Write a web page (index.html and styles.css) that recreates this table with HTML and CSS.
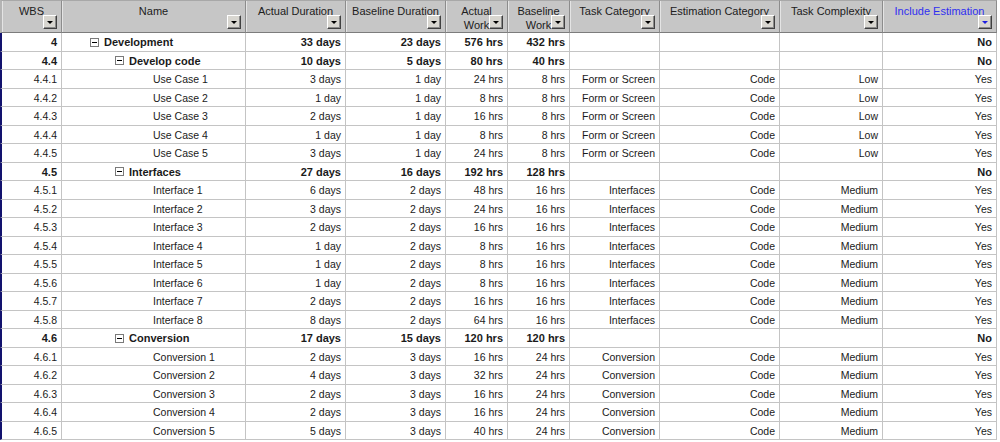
FILE: index.html
```html
<!DOCTYPE html>
<html>
<head>
<meta charset="utf-8">
<link rel="stylesheet" href="styles.css">
</head>
<body>
<div class="sheet">
  <div class="row head">
    <div class="hc"><span class="ht">WBS</span><span class="dd"></span></div>
    <div class="hc"><span class="ht">Name</span><span class="dd"></span></div>
    <div class="hc"><span class="ht nowrap">Actual Duration</span><span class="dd"></span></div>
    <div class="hc"><span class="ht nowrap">Baseline Duration</span><span class="dd"></span></div>
    <div class="hc"><span class="ht">Actual<br>Work</span><span class="dd"></span></div>
    <div class="hc"><span class="ht">Baseline<br>Work</span><span class="dd"></span></div>
    <div class="hc"><span class="ht nowrap">Task Category</span><span class="dd"></span></div>
    <div class="hc"><span class="ht nowrap">Estimation Category</span><span class="dd"></span></div>
    <div class="hc"><span class="ht nowrap">Task Complexity</span><span class="dd"></span></div>
    <div class="hc active"><span class="ht nowrap">Include Estimation</span><span class="dd"></span></div>
  </div>

  <div class="row sum"><div class="c wbs">4</div><div class="c nm l1"><span class="tg"></span>Development</div><div class="c">33 days</div><div class="c">23 days</div><div class="c">576 hrs</div><div class="c">432 hrs</div><div class="c"></div><div class="c"></div><div class="c"></div><div class="c">No</div></div>
  <div class="row sum"><div class="c wbs">4.4</div><div class="c nm l2"><span class="tg"></span>Develop code</div><div class="c">10 days</div><div class="c">5 days</div><div class="c">80 hrs</div><div class="c">40 hrs</div><div class="c"></div><div class="c"></div><div class="c"></div><div class="c">No</div></div>
  <div class="row"><div class="c wbs">4.4.1</div><div class="c nm lf">Use Case 1</div><div class="c">3 days</div><div class="c">1 day</div><div class="c">24 hrs</div><div class="c">8 hrs</div><div class="c">Form or Screen</div><div class="c">Code</div><div class="c">Low</div><div class="c">Yes</div></div>
  <div class="row"><div class="c wbs">4.4.2</div><div class="c nm lf">Use Case 2</div><div class="c">1 day</div><div class="c">1 day</div><div class="c">8 hrs</div><div class="c">8 hrs</div><div class="c">Form or Screen</div><div class="c">Code</div><div class="c">Low</div><div class="c">Yes</div></div>
  <div class="row"><div class="c wbs">4.4.3</div><div class="c nm lf">Use Case 3</div><div class="c">2 days</div><div class="c">1 day</div><div class="c">16 hrs</div><div class="c">8 hrs</div><div class="c">Form or Screen</div><div class="c">Code</div><div class="c">Low</div><div class="c">Yes</div></div>
  <div class="row"><div class="c wbs">4.4.4</div><div class="c nm lf">Use Case 4</div><div class="c">1 day</div><div class="c">1 day</div><div class="c">8 hrs</div><div class="c">8 hrs</div><div class="c">Form or Screen</div><div class="c">Code</div><div class="c">Low</div><div class="c">Yes</div></div>
  <div class="row"><div class="c wbs">4.4.5</div><div class="c nm lf">Use Case 5</div><div class="c">3 days</div><div class="c">1 day</div><div class="c">24 hrs</div><div class="c">8 hrs</div><div class="c">Form or Screen</div><div class="c">Code</div><div class="c">Low</div><div class="c">Yes</div></div>
  <div class="row sum"><div class="c wbs">4.5</div><div class="c nm l2"><span class="tg"></span>Interfaces</div><div class="c">27 days</div><div class="c">16 days</div><div class="c">192 hrs</div><div class="c">128 hrs</div><div class="c"></div><div class="c"></div><div class="c"></div><div class="c">No</div></div>
  <div class="row"><div class="c wbs">4.5.1</div><div class="c nm lf">Interface 1</div><div class="c">6 days</div><div class="c">2 days</div><div class="c">48 hrs</div><div class="c">16 hrs</div><div class="c">Interfaces</div><div class="c">Code</div><div class="c">Medium</div><div class="c">Yes</div></div>
  <div class="row"><div class="c wbs">4.5.2</div><div class="c nm lf">Interface 2</div><div class="c">3 days</div><div class="c">2 days</div><div class="c">24 hrs</div><div class="c">16 hrs</div><div class="c">Interfaces</div><div class="c">Code</div><div class="c">Medium</div><div class="c">Yes</div></div>
  <div class="row"><div class="c wbs">4.5.3</div><div class="c nm lf">Interface 3</div><div class="c">2 days</div><div class="c">2 days</div><div class="c">16 hrs</div><div class="c">16 hrs</div><div class="c">Interfaces</div><div class="c">Code</div><div class="c">Medium</div><div class="c">Yes</div></div>
  <div class="row"><div class="c wbs">4.5.4</div><div class="c nm lf">Interface 4</div><div class="c">1 day</div><div class="c">2 days</div><div class="c">8 hrs</div><div class="c">16 hrs</div><div class="c">Interfaces</div><div class="c">Code</div><div class="c">Medium</div><div class="c">Yes</div></div>
  <div class="row"><div class="c wbs">4.5.5</div><div class="c nm lf">Interface 5</div><div class="c">1 day</div><div class="c">2 days</div><div class="c">8 hrs</div><div class="c">16 hrs</div><div class="c">Interfaces</div><div class="c">Code</div><div class="c">Medium</div><div class="c">Yes</div></div>
  <div class="row"><div class="c wbs">4.5.6</div><div class="c nm lf">Interface 6</div><div class="c">1 day</div><div class="c">2 days</div><div class="c">8 hrs</div><div class="c">16 hrs</div><div class="c">Interfaces</div><div class="c">Code</div><div class="c">Medium</div><div class="c">Yes</div></div>
  <div class="row"><div class="c wbs">4.5.7</div><div class="c nm lf">Interface 7</div><div class="c">2 days</div><div class="c">2 days</div><div class="c">16 hrs</div><div class="c">16 hrs</div><div class="c">Interfaces</div><div class="c">Code</div><div class="c">Medium</div><div class="c">Yes</div></div>
  <div class="row"><div class="c wbs">4.5.8</div><div class="c nm lf">Interface 8</div><div class="c">8 days</div><div class="c">2 days</div><div class="c">64 hrs</div><div class="c">16 hrs</div><div class="c">Interfaces</div><div class="c">Code</div><div class="c">Medium</div><div class="c">Yes</div></div>
  <div class="row sum"><div class="c wbs">4.6</div><div class="c nm l2"><span class="tg"></span>Conversion</div><div class="c">17 days</div><div class="c">15 days</div><div class="c">120 hrs</div><div class="c">120 hrs</div><div class="c"></div><div class="c"></div><div class="c"></div><div class="c">No</div></div>
  <div class="row"><div class="c wbs">4.6.1</div><div class="c nm lf">Conversion 1</div><div class="c">2 days</div><div class="c">3 days</div><div class="c">16 hrs</div><div class="c">24 hrs</div><div class="c">Conversion</div><div class="c">Code</div><div class="c">Medium</div><div class="c">Yes</div></div>
  <div class="row"><div class="c wbs">4.6.2</div><div class="c nm lf">Conversion 2</div><div class="c">4 days</div><div class="c">3 days</div><div class="c">32 hrs</div><div class="c">24 hrs</div><div class="c">Conversion</div><div class="c">Code</div><div class="c">Medium</div><div class="c">Yes</div></div>
  <div class="row"><div class="c wbs">4.6.3</div><div class="c nm lf">Conversion 3</div><div class="c">2 days</div><div class="c">3 days</div><div class="c">16 hrs</div><div class="c">24 hrs</div><div class="c">Conversion</div><div class="c">Code</div><div class="c">Medium</div><div class="c">Yes</div></div>
  <div class="row"><div class="c wbs">4.6.4</div><div class="c nm lf">Conversion 4</div><div class="c">2 days</div><div class="c">3 days</div><div class="c">16 hrs</div><div class="c">24 hrs</div><div class="c">Conversion</div><div class="c">Code</div><div class="c">Medium</div><div class="c">Yes</div></div>
  <div class="row"><div class="c wbs">4.6.5</div><div class="c nm lf">Conversion 5</div><div class="c">5 days</div><div class="c">3 days</div><div class="c">40 hrs</div><div class="c">24 hrs</div><div class="c">Conversion</div><div class="c">Code</div><div class="c">Medium</div><div class="c">Yes</div></div>
</div>
</body>
</html>
```

FILE: styles.css
```css
html, body {
  margin: 0;
  padding: 0;
  background: #ffffff;
}
body {
  font-family: "Liberation Sans", Arial, sans-serif;
  color: #1a1a1a;
  width: 1000px;
  height: 442px;
  overflow: hidden;
}
.sheet {
  width: 997px;
}
.row {
  display: grid;
  grid-template-columns: 62px 184px 100px 100px 62px 62px 90px 120px 103px 114px;
  height: 19px;
}
.row:nth-child(odd) {
  height: 18px;
}
.row.head {
  height: 33px;
}
.hc {
  position: relative;
  box-sizing: border-box;
  background: #c6c6c6;
  border-top: 1px solid #a8a8a8;
  border-right: 1px solid #8c8c8c;
  border-bottom: 1px solid #7c7c7c;
  box-shadow: inset 1px 0 0 #e4e4e4;
  overflow: hidden;
  text-align: center;
  font-size: 11px;
  line-height: 14px;
  color: #202020;
  padding-top: 3px;
}
.hc:first-child {
  border-left: 2px solid #b4b4b4;
}
.ht {
  display: block;
  padding: 0 2px;
}
.ht.nowrap {
  white-space: nowrap;
  margin: 0 -20px;
}
.hc.active .ht {
  color: #2f2ff0;
}
.dd {
  position: absolute;
  right: 4px;
  top: 14px;
  width: 14px;
  height: 14px;
  box-sizing: border-box;
  background: #d8d6d0;
  border-top: 1px solid #ffffff;
  border-left: 1px solid #ffffff;
  border-right: 1px solid #404040;
  border-bottom: 1px solid #404040;
  box-shadow: inset -1px -1px 0 #8a8a8a;
}
.dd::after {
  content: "";
  position: absolute;
  left: 3px;
  top: 5px;
  border-left: 3px solid transparent;
  border-right: 3px solid transparent;
  border-top: 3px solid #000;
}
.hc.active .dd::after {
  border-top-color: #2020e0;
}
.c {
  box-sizing: border-box;
  border-right: 1px solid #c4c4c4;
  border-bottom: 1px solid #c4c4c4;
  font-size: 10.5px;
  display: flex;
  align-items: center;
  justify-content: flex-end;
  padding: 0 4px 0 2px;
  white-space: nowrap;
  overflow: hidden;
}
.c.wbs {
  border-left: 2px solid #12126e;
  padding-right: 4px;
}
.row.sum .c {
  font-weight: bold;
  font-size: 11px;
}
.c.nm {
  justify-content: flex-start;
}
.c.nm.l1 {
  padding-left: 28px;
}
.c.nm.l2 {
  padding-left: 53px;
}
.c.nm.lf {
  padding-left: 91px;
}
.tg {
  position: relative;
  display: inline-block;
  width: 9px;
  height: 9px;
  box-sizing: border-box;
  border: 1px solid #7a7a7a;
  margin-right: 5px;
  background: #fff;
}
.tg::after {
  content: "";
  position: absolute;
  left: 1px;
  top: 3px;
  width: 5px;
  height: 1px;
  background: #000;
}
```
